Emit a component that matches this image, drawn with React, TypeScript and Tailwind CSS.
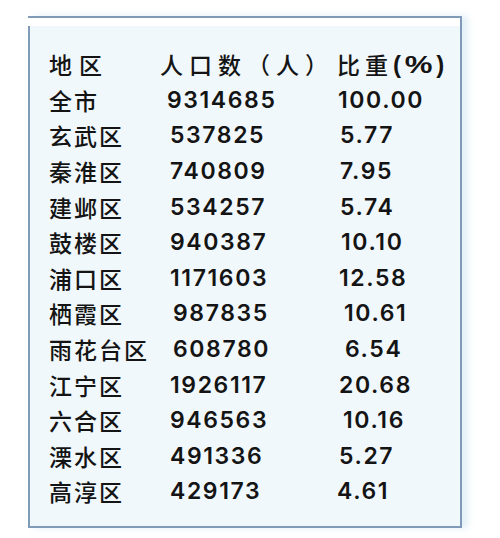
import React from "react";

type Row = { name: string; pop: string; pct: string; p2: string; p3: string };

const rows: Row[] = [
  { name: "全市", pop: "9314685", pct: "100.00", p2: "pl-[7px]", p3: "pl-[1px]" },
  { name: "玄武区", pop: "537825", pct: "5.77", p2: "pl-[10px]", p3: "pl-[3px]" },
  { name: "秦淮区", pop: "740809", pct: "7.95", p2: "pl-[10px]", p3: "pl-[3px]" },
  { name: "建邺区", pop: "534257", pct: "5.74", p2: "pl-[10px]", p3: "pl-[3px]" },
  { name: "鼓楼区", pop: "940387", pct: "10.10", p2: "pl-[10px]", p3: "pl-[4px]" },
  { name: "浦口区", pop: "1171603", pct: "12.58", p2: "pl-[10px]", p3: "pl-[2px]" },
  { name: "栖霞区", pop: "987835", pct: "10.61", p2: "pl-[13px]", p3: "pl-[7px]" },
  { name: "雨花台区", pop: "608780", pct: "6.54", p2: "pl-[13px]", p3: "pl-[8px]" },
  { name: "江宁区", pop: "1926117", pct: "20.68", p2: "pl-[10px]", p3: "pl-[2px]" },
  { name: "六合区", pop: "946563", pct: "10.16", p2: "pl-[10px]", p3: "pl-[6px]" },
  { name: "溧水区", pop: "491336", pct: "5.27", p2: "pl-[10px]", p3: "pl-[2px]" },
  { name: "高淳区", pop: "429173", pct: "4.61", p2: "pl-[10px]", p3: "pl-[0px]" },
];

const cjk = { fontFamily: '"Noto Sans CJK SC", sans-serif' };
const num = { fontFamily: '"Inter", "Liberation Sans", sans-serif' };

export default function App() {
  return (
    <div className="w-[500px] h-[538px] bg-white overflow-hidden pt-[16px] pl-[28px] text-[#141414]">
      <div className="w-[434px] h-[512px] border-t-2 border-r-2 border-b-2 border-[#7f9bb8] flex flex-col shadow-[6px_0_6px_rgba(200,225,240,0.5)]">
        <div className="h-[8px] bg-white shrink-0" />
        <div className="flex-1 border-l-2 border-[#7f9bb8] bg-[#f1f8fb] pt-[21px] pl-[19px]">
          <div className="grid grid-cols-[111px_177px_1fr] h-[35.6px] items-center text-[23px] font-medium leading-none">
            <div className="tracking-[7px]" style={cjk}>地区</div>
            <div className="tracking-[6px] whitespace-nowrap" style={cjk}>人口数（人）</div>
            <div className="whitespace-nowrap flex items-center">
              <span className="tracking-[5px]" style={cjk}>比重</span>
              <span className="font-bold text-[24px] flex items-center" style={{ fontFamily: '"Liberation Sans", sans-serif' }}>
                <span>(</span>
                <span className="ml-[7px] mr-[7px] inline-block scale-x-[1.3]">%</span>
                <span>)</span>
              </span>
            </div>
          </div>
          {rows.map((r) => (
            <div
              key={r.name}
              className="grid grid-cols-[111px_177px_1fr] h-[35.6px] items-center text-[23px] leading-none"
            >
              <div className="tracking-[2px] whitespace-nowrap font-medium" style={cjk}>{r.name}</div>
              <div className={`tracking-[1.6px] font-semibold ${r.p2}`} style={num}>{r.pop}</div>
              <div className={`tracking-[1.6px] font-semibold ${r.p3}`} style={num}>{r.pct}</div>
            </div>
          ))}
        </div>
      </div>
    </div>
  );
}
